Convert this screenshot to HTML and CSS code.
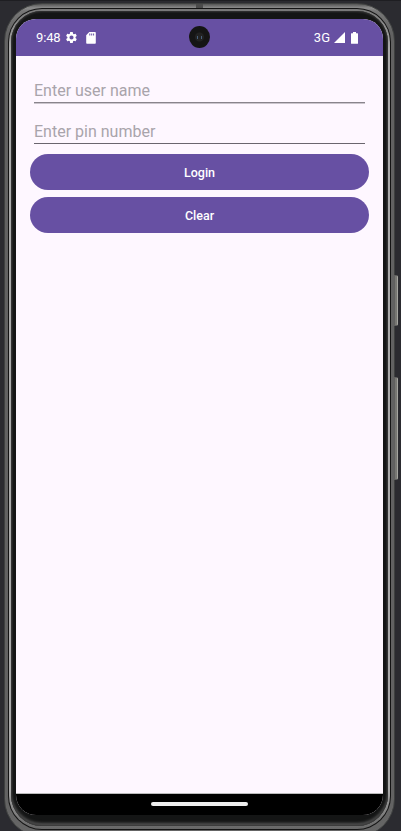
FILE: index.html
```html
<!DOCTYPE html>
<html lang="en">
<head>
<meta charset="utf-8">
<title>Login</title>
<link rel="stylesheet" href="styles.css">
</head>
<body>
<div class="phone">
  <span class="side-key power"></span>
  <span class="side-key volume"></span>
  <span class="antenna"></span>
  <div class="rim"><div class="groove"><div class="inner-rim"><div class="bezel">
    <div class="screen">
      <header class="status">
        <span class="time">9:48</span>
        <svg class="gear" viewBox="0 0 24 24"><path fill="#fff" fill-rule="evenodd" d="M19.4 13c.1-.7.1-1.3 0-2l2.1-1.6c.2-.2.3-.5.1-.7l-2-3.400c-.1-.2-.4-.3-.6-.2l-2.500 1c-.5-.4-1.100-.7-1.700-1l-.4-2.600c0-.3-.2-.5-.5-.5h-4c-.3 0-.5.2-.5.5L9 5.100c-.6.3-1.200.6-1.700 1l-2.500-1c-.2-.1-.5 0-.6.2l-2 3.400c-.1.200-.1.500.1.700L4.500 11c-.1.700-.1 1.300 0 2l-2.200 1.600c-.2.200-.2.500-.1.700l2 3.400c.1.200.4.300.6.200l2.500-1c.5.400 1.100.700 1.700 1l.4 2.600c0 .300.2.500.5.500h4c.3 0 .5-.2.5-.5l.4-2.600c.6-.3 1.200-.6 1.700-1l2.500 1c.2.100.5 0 .6-.2l2-3.400c.1-.2.1-.5-.1-.7zM12 8.200a3.800 3.800 0 1 1 0 7.600a3.800 3.800 0 0 1 0-7.600z"/></svg>
        <svg class="sd" viewBox="0 0 10 12"><path fill="#fff" fill-rule="evenodd" d="M3.300 0H9a.8.800 0 0 1 .8.800V11a.8.800 0 0 1-.8.800H1a.8.800 0 0 1-.8-.8V3.200zM3.300 1.600v2h1v-2zM5.200 1.600v2h1v-2zM7.100 1.600v2h1v-2z"/></svg>
        <span class="camera"><i></i><i></i></span>
        <span class="network">3G</span>
        <svg class="signal" viewBox="0 0 11 11"><path fill="#fff" d="M0 11L11 0V11z"/></svg>
        <svg class="battery" viewBox="0 0 7 12"><path fill="#fff" d="M2 0h3v1.200h1.500q.5 0 .5.500v9.600q0 .5-.5.500h-6q-.5 0-.5-.5V1.700q0-.5.500-.5H2z"/></svg>
      </header>
      <main class="form">
        <div class="field soft">Enter user name</div>
        <div class="field second">Enter pin number</div>
        <div class="button">Login</div>
        <div class="button">Clear</div>
      </main>
      <footer class="nav"><span class="handle"></span></footer>
    </div>
  </div></div></div></div>
</div>
</body>
</html>
```

FILE: styles.css
```css
* { box-sizing: border-box; }
body {
  margin: 0;
  width: 401px;
  height: 831px;
  overflow: hidden;
  background: #2b2b30;
  border-top: 1px solid #1e1e22;
  font-family: Roboto, sans-serif;
}
.phone {
  position: relative;
  width: 391px;
  height: 834px;
  margin: 2px 0 0 4px;
}
.rim {
  height: 834px;
  padding: 4px 3px 6px;
  border-radius: 38px;
  border: 1px solid #3f4140;
  background: linear-gradient(#555 0, #8c8c8c 4px, #777 7px, #626262 30px, #626262 790px, #666 100%);
}
.groove {
  height: 100%;
  padding: 1px;
  border-radius: 34px;
  background: #141414;
}
.inner-rim {
  height: 100%;
  padding: 2px 2px 3px;
  border-radius: 33px;
  background: linear-gradient(#777, #aaa 40px, #aaa 780px, #666);
}
.bezel {
  height: 100%;
  padding: 8px 5px 0;
  border-radius: 31px;
  background: #141515;
  box-shadow: inset 0 0 2px 1px #353535, inset 0 -3px 3px #555;
}
.screen {
  display: flex;
  flex-direction: column;
  width: 367px;
  height: 796px;
  border-radius: 20px;
  overflow: hidden;
  background: #fef7ff;
}
.status {
  position: relative;
  display: flex;
  flex: none;
  align-items: center;
  height: 37px;
  padding: 0 25px 0 20px;
  background: #6750a3;
  color: #fff;
  font-size: 13px;
}
.time { width: 29px; letter-spacing: -.15px; }
.gear { width: 13px; height: 13px; }
.sd { width: 10px; height: 12px; margin-left: 8px; }
.network { margin-left: auto; }
.signal { width: 11px; height: 11px; margin-left: 4px; }
.battery { width: 7px; height: 12px; margin-left: 6px; }
.camera {
  position: absolute;
  top: 7px;
  left: 173px;
  display: flex;
  align-items: center;
  justify-content: center;
  gap: 3px;
  width: 21px;
  height: 22px;
  border-radius: 50%;
  background: radial-gradient(circle, #222 0 4px, #151515 5px);
}
.camera i { width: 1px; height: 3px; background: #48617d; }
.form { flex: 1; padding: 14px 14px 0; }
.field {
  height: 33px;
  margin: 0 4px;
  padding-top: 11px;
  border-bottom: 1px solid #89848c;
  color: #a9a4ab;
  font-size: 16px;
  line-height: 20px;
}
.soft { box-shadow: 0 1px #cbc5cd; }
.second { margin-top: 8px; border-color: #6a656e; line-height: 19px; }
.button {
  display: flex;
  align-items: center;
  justify-content: center;
  height: 36px;
  margin-top: 7px;
  border-radius: 18px;
  background: #6750a3;
  color: #fff;
  font-size: 12.5px;
  font-weight: 500;
}
.second + .button { margin-top: 10px; }
.nav {
  display: flex;
  justify-content: center;
  flex: none;
  height: 22px;
  padding-top: 8px;
  border-top: 1px solid #bbb;
  background: #000;
}
.handle { width: 97px; height: 4px; border-radius: 2px; background: #eee; }
.side-key {
  position: absolute;
  left: 390px;
  width: 4px;
  border: 1px solid #60605f;
  border-right-color: #a5a5a0;
  border-radius: 0 2px 2px 0;
  background: #777773;
}
.power { top: 272px; height: 51px; }
.volume { top: 374px; height: 103px; }
.antenna { position: absolute; top: 1px; left: 192px; width: 7px; height: 4px; background: #4b4b4b; }
```
